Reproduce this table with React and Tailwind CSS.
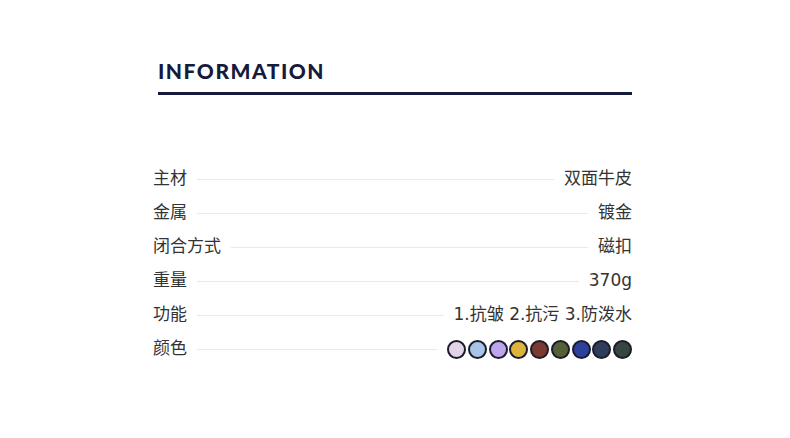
import React from "react";

const specs = [
  { label: "主材", value: "双面牛皮" },
  { label: "金属", value: "镀金" },
  { label: "闭合方式", value: "磁扣" },
  { label: "重量", value: "370g" },
  { label: "功能", value: "1.抗皱 2.抗污 3.防泼水" },
  { label: "颜色", colors: true },
];

const swatches = [
  "#e2d4e8",
  "#a8c3e6",
  "#bca5ec",
  "#dbb33d",
  "#7b3a2f",
  "#556036",
  "#2d409b",
  "#2e3d5b",
  "#35473f",
];

const SpecRow = ({ label, value, colors }) => (
  <div className="flex items-center h-[24px]">
    <span className="shrink-0">{label}</span>
    <div className="flex-1 h-px bg-[#e9e9e9] mx-[10px]" />
    {colors ? (
      <div className="flex gap-[1.75px]">
        {swatches.map((c) => (
          <span
            key={c}
            className="w-[19px] h-[19px] rounded-full border-2 border-[#1b1b2b] block"
            style={{ backgroundColor: c }}
          />
        ))}
      </div>
    ) : (
      <span className="shrink-0">{value}</span>
    )}
  </div>
);

const App = () => {
  return (
    <div className="w-[790px] h-[438px] bg-white overflow-hidden">
      <div className="pt-[59px] pl-[158px] w-[632px]">
        <h1
          className="text-[21px] leading-[24px] font-black tracking-[1.5px] text-[#161a3b]"
          style={{ fontFamily: "Lato, 'Open Sans', sans-serif" }}
        >
          INFORMATION
        </h1>
        <div className="mt-[9px] h-[3px] bg-[#161a3b]" />
      </div>

      <div
        className="mt-[72px] ml-[153px] w-[479px] flex flex-col gap-[10px] text-[17px] text-[#333333]"
        style={{ fontFamily: "'DejaVu Sans', 'Noto Sans CJK SC', sans-serif" }}
      >
        {specs.map((s) => (
          <SpecRow key={s.label} {...s} />
        ))}
      </div>
    </div>
  );
};

export default App;
